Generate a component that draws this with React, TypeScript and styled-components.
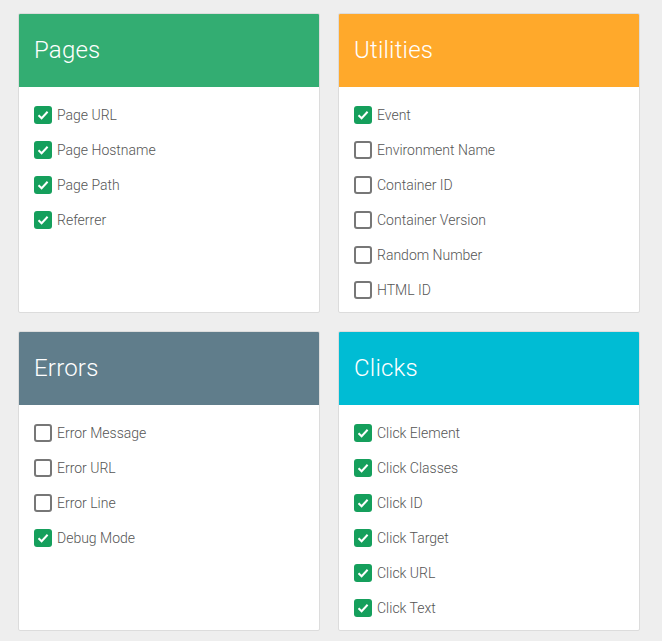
import React from 'react';
import styled, { createGlobalStyle } from 'styled-components';

const GlobalStyle = createGlobalStyle`
  body {
    margin: 0;
    background: #eeeeee;
    font-family: Roboto, "Liberation Sans", sans-serif;
  }
`;

const Grid = styled.div`
  display: grid;
  grid-template-columns: 302px 302px;
  grid-auto-rows: 300px;
  gap: 18px;
  padding: 13px 0 0 18px;
`;

const Card = styled.section`
  background: #fff;
  border: 1px solid #dcdcdc;
  border-radius: 2px;
  overflow: hidden;
  box-sizing: border-box;
`;

const CardHeader = styled.header<{ $color: string }>`
  background: ${(p) => p.$color};
  height: 74px;
  display: flex;
  align-items: center;
  padding: 0 16px;
  margin: -1px -1px 0;
`;

const Title = styled.h2`
  margin: 0;
  color: #fff;
  font-weight: 300;
  font-size: 24px;
  letter-spacing: 0.2px;
`;

const List = styled.ul`
  list-style: none;
  margin: 0;
  padding: 10px 15px 6px;
`;

const Item = styled.li`
  display: flex;
  align-items: center;
  height: 35px;
  gap: 5px;
  font-size: 14px;
  font-weight: 300;
  color: #555;
`;

const Box = styled.span<{ $checked: boolean }>`
  width: 18px;
  height: 18px;
  box-sizing: border-box;
  border-radius: 3px;
  display: flex;
  align-items: center;
  justify-content: center;
  background: ${(p) => (p.$checked ? '#159f5c' : 'transparent')};
  border: ${(p) => (p.$checked ? 'none' : '2px solid #777')};
`;

type Section = {
  title: string;
  color: string;
  items: [string, boolean][];
};

const sections: Section[] = [
  {
    title: 'Pages',
    color: '#33ad72',
    items: [
      ['Page URL', true],
      ['Page Hostname', true],
      ['Page Path', true],
      ['Referrer', true],
    ],
  },
  {
    title: 'Utilities',
    color: '#ffa92b',
    items: [
      ['Event', true],
      ['Environment Name', false],
      ['Container ID', false],
      ['Container Version', false],
      ['Random Number', false],
      ['HTML ID', false],
    ],
  },
  {
    title: 'Errors',
    color: '#607d8b',
    items: [
      ['Error Message', false],
      ['Error URL', false],
      ['Error Line', false],
      ['Debug Mode', true],
    ],
  },
  {
    title: 'Clicks',
    color: '#00bcd4',
    items: [
      ['Click Element', true],
      ['Click Classes', true],
      ['Click ID', true],
      ['Click Target', true],
      ['Click URL', true],
      ['Click Text', true],
    ],
  },
];

const Check = () => (
  <svg width="14" height="14" viewBox="0 0 14 14">
    <path d="M2.5 7.2 L5.6 10.2 L11.6 3.8" fill="none" stroke="#fff" strokeWidth="2" />
  </svg>
);

const App = () => {
  return (
    <>
      <GlobalStyle />
      <Grid>
        {sections.map((s) => (
          <Card key={s.title}>
            <CardHeader $color={s.color}>
              <Title>{s.title}</Title>
            </CardHeader>
            <List>
              {s.items.map(([label, checked]) => (
                <Item key={label}>
                  <Box $checked={checked}>{checked && <Check />}</Box>
                  {label}
                </Item>
              ))}
            </List>
          </Card>
        ))}
      </Grid>
    </>
  );
};

export default App;
